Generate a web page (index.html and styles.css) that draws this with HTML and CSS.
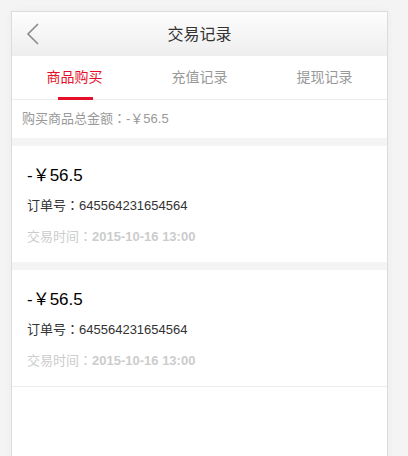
FILE: index.html
```html
<!DOCTYPE html>
<html lang="zh-CN">

<head>
    <meta charset="UTF-8">
    <meta name="viewport" content="width=device-width, initial-scale=1.0">
    <title>交易记录</title>
    <link rel="stylesheet" href="styles.css">
</head>

<body>
    <div class="page">
        <header class="top-bar">
            <a class="back" href="#">
                <svg width="14" height="22" viewBox="0 0 14 22">
                    <polyline points="12,1 2,11 12,21" fill="none" stroke="#8a8a8a" stroke-width="1.6" />
                </svg>
            </a>
            <h1>交易记录</h1>
        </header>

        <nav class="tabs">
            <div class="tab active">商品购买</div>
            <div class="tab">充值记录</div>
            <div class="tab">提现记录</div>
        </nav>

        <div class="summary">购买商品总金额<span class="colon" lang="zh-TW">：</span>-￥56.5</div>

        <div class="record">
            <div class="amount">-￥56.5</div>
            <div class="order">订单号<span class="colon" lang="zh-TW">：</span>645564231654564</div>
            <div class="time">交易时间<span class="colon" lang="zh-TW">：</span><b>2015-10-16 13:00</b></div>
        </div>

        <div class="record last">
            <div class="amount">-￥56.5</div>
            <div class="order">订单号<span class="colon" lang="zh-TW">：</span>645564231654564</div>
            <div class="time">交易时间<span class="colon" lang="zh-TW">：</span><b>2015-10-16 13:00</b></div>
        </div>
    </div>
</body>

</html>
```

FILE: styles.css
```css
:root {
    --color-1: #fff;
    --color-2: #000;
    --color-3: #333;
    --color-4: #999;
    --color-5: #ccc;
    --color-6: #f4f4f4;
    --color-7: #ececec;
    --color-8: #dcdcdc;
    --color-9: #e60f2a;
}

body {
    font-family: "Liberation Sans", "Noto Sans CJK SC", sans-serif;
    background-color: var(--color-6);
    margin: 0;
    padding: 0;
}

.page {
    width: 375px;
    min-height: 460px;
    margin: 11px 0 0 11px;
    background-color: var(--color-1);
    border: 1px solid var(--color-8);
    border-bottom: none;
    box-shadow: 0 0 8px rgba(0, 0, 0, 0.04);
}

.top-bar {
    height: 42px;
    padding-bottom: 2px;
    position: relative;
    display: flex;
    align-items: center;
    justify-content: center;
    background: linear-gradient(#fdfdfd, #eeeeee);
}

.top-bar h1 {
    margin: 0;
    font-size: 16px;
    font-weight: normal;
    color: var(--color-3);
}

.back {
    position: absolute;
    left: 14px;
    top: 11px;
    display: block;
    line-height: 0;
}

.tabs {
    display: flex;
    height: 43px;
    border-bottom: 1px solid var(--color-7);
}

.tab {
    flex: 1;
    position: relative;
    display: flex;
    align-items: center;
    justify-content: center;
    padding-bottom: 3px;
    font-size: 14px;
    color: var(--color-4);
}

.tab.active {
    color: var(--color-9);
}

.tab.active::after {
    content: "";
    position: absolute;
    left: 46px;
    bottom: -1px;
    width: 35px;
    height: 3px;
    background-color: var(--color-9);
}

.colon {
    font-family: "Noto Sans CJK TC", sans-serif;
    line-height: 0;
}

.summary {
    height: 38px;
    line-height: 38px;
    padding-left: 10px;
    font-size: 13px;
    color: var(--color-4);
    border-bottom: 8px solid var(--color-6);
}

.record {
    padding: 18px 15px 15px;
    border-bottom: 8px solid var(--color-6);
}

.record.last {
    border-bottom: 1px solid var(--color-7);
}

.amount {
    font-size: 17px;
    line-height: 24px;
    color: var(--color-2);
}

.order {
    margin-top: 8px;
    font-size: 13px;
    line-height: 20px;
    color: var(--color-3);
}

.time {
    margin-top: 11px;
    font-size: 13px;
    line-height: 20px;
    color: var(--color-5);
}
```
